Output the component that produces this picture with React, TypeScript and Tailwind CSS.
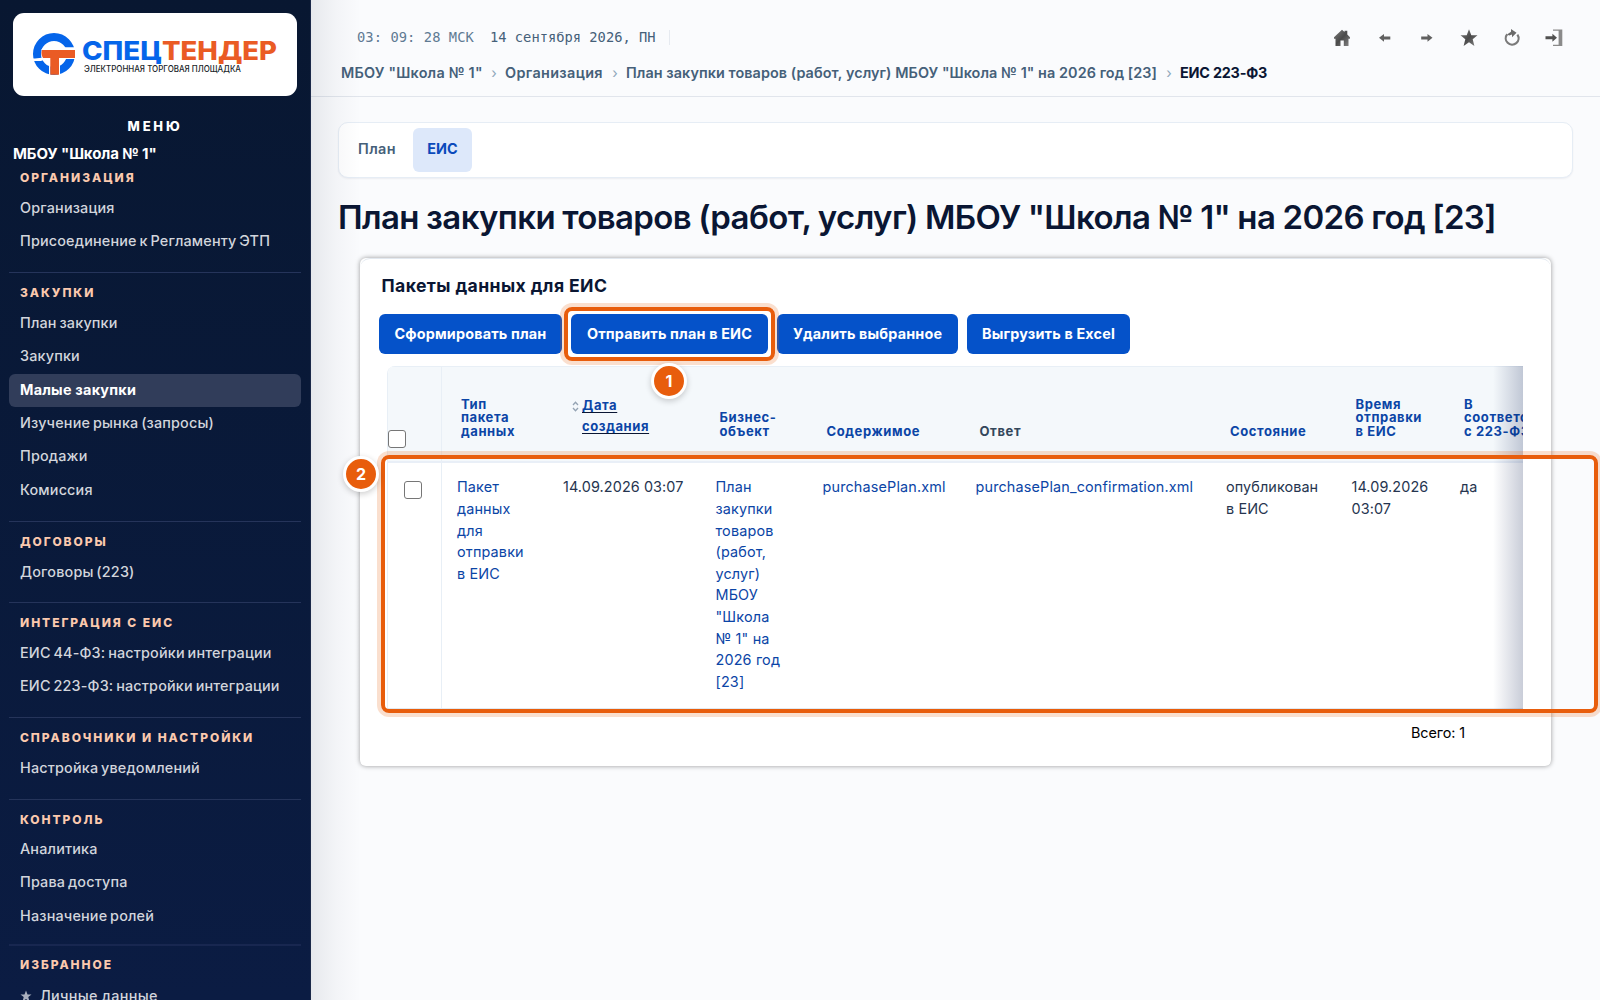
import { clsx } from "clsx";

type MenuGroup = {
  title: string;
  items: string[];
  className: string;
};

const menuGroups: MenuGroup[] = [
  {
    title: "Закупки",
    items: [
      "План закупки",
      "Закупки",
      "Малые закупки",
      "Изучение рынка (запросы)",
      "Продажи",
      "Комиссия",
    ],
    className: "h-[249px]",
  },
  { title: "Договоры", items: ["Договоры (223)"], className: "h-[81px]" },
  {
    title: "Интеграция с ЕИС",
    items: [
      "ЕИС 44-ФЗ: настройки интеграции",
      "ЕИС 223-ФЗ: настройки интеграции",
    ],
    className: "h-[115px]",
  },
  {
    title: "Справочники и настройки",
    items: ["Настройка уведомлений"],
    className: "h-[82px]",
  },
  {
    title: "Контроль",
    items: ["Аналитика", "Права доступа", "Назначение ролей"],
    className: "h-[145px]",
  },
];

const breadcrumbs = [
  { label: 'МБОУ "Школа № 1"', className: "w-[142px] tracking-[0.22px]" },
  { label: "Организация", className: "w-[99px] tracking-[0.35px]" },
  {
    label: 'План закупки товаров (работ, услуг) МБОУ "Школа № 1" на 2026 год [23]',
    className: "w-[532px] tracking-[0.07px]",
  },
];

const columns = [
  { head: "Тип\nпакета\nданных", cell: "Пакет\nданных\nдля\nотправки\nв ЕИС", link: true },
  { head: "Дата\nсоздания", cell: "14.09.2026 03:07", sortable: true },
  {
    head: "Бизнес-\nобъект",
    cell: 'План\nзакупки\nтоваров\n(работ,\nуслуг)\nМБОУ\n"Школа\n№ 1" на\n2026 год\n[23]',
    link: true,
  },
  { head: "Содержимое", cell: "purchasePlan.xml", link: true },
  { head: "Ответ", cell: "purchasePlan_confirmation.xml", link: true, plainHead: true },
  { head: "Состояние", cell: "опубликован\nв ЕИС" },
  { head: "Время\nотправки\nв ЕИС", cell: "14.09.2026\n03:07" },
  { head: "В\nсоответствии\nс 223-ФЗ", cell: "да" },
];

const gridCols =
  "grid w-[1227px] grid-cols-[54px_106px_152.5px_107px_153px_250.5px_125.5px_108.5px_170px]";

function Logo() {
  return (
    <div className="mx-[13px] mt-[13px] h-[83px] rounded-[11px] bg-white">
      <svg width="284" height="83" viewBox="13 13 284 83">
        <circle cx="54" cy="54" r="17" fill="none" stroke="#0565ea" strokeWidth="8" />
        <path d="M43.500 47.300H77V50H41z" fill="#fff" />
        <path d="M32 58.500h3l9-1v2.200l-3 1.300h-9z" fill="#fff" />
        <path d="M58 57h19v2H60v17h-2zM49 58h1.500v18H49z" fill="#fff" />
        <path d="M42 50h33v8H59v16.800h-8.700V58H43q-2.500-4-1-8z" fill="#ea5b24" />
        <text
          x="82"
          y="60"
          fontSize="25.500"
          fontWeight="800"
          fontFamily="Inter, sans-serif"
          textLength="80"
          lengthAdjust="spacingAndGlyphs"
          fill="#0565ea"
        >
          СПЕЦ
        </text>
        <text
          x="162"
          y="60"
          fontSize="25.500"
          fontWeight="800"
          fontFamily="Inter, sans-serif"
          textLength="115"
          lengthAdjust="spacingAndGlyphs"
          fill="#ea5b24"
        >
          ТЕНДЕР
        </text>
        <text
          x="84"
          y="72"
          fontSize="8.500"
          fontWeight="500"
          fontFamily="Inter, sans-serif"
          textLength="157"
          lengthAdjust="spacingAndGlyphs"
          fill="#1b1f2a"
        >
          ЭЛЕКТРОННАЯ ТОРГОВАЯ ПЛОЩАДКА
        </text>
      </svg>
    </div>
  );
}

function MenuHeading({ children }: { children: string }) {
  return (
    <div className="h-4 pl-[11px] text-[12px] leading-4 font-extrabold tracking-[1.95px] text-[#fbc9ae] uppercase">
      {children}
    </div>
  );
}

function MenuItem({ label }: { label: string }) {
  const active = label === "Малые закупки";
  return (
    <a
      className={clsx(
        "block h-[33.33px] rounded-md pl-[11px] leading-[31px] whitespace-nowrap",
        active
          ? "bg-[#313d5a] font-bold tracking-[0.22px] text-white"
          : "font-medium tracking-[0.17px] text-[#d2d5dc] [word-spacing:-1.2px]",
      )}
    >
      {label}
    </a>
  );
}

function Sidebar() {
  return (
    <aside className="relative z-10 h-[1000px] w-[311px] shrink-0 overflow-hidden border-r border-[#1b2949] bg-linear-to-b from-[#081731] to-[#0b1c43] text-[14.4px]">
      <Logo />
      <div className="mt-5 h-5 text-center text-[13px] leading-5 font-extrabold tracking-[2.8px] text-white">
        МЕНЮ
      </div>
      <div className="mt-[7px] h-[22px] pl-[13px] text-[15px] leading-[22px] font-bold tracking-[-0.12px] text-white">
        МБОУ "Школа № 1"
      </div>
      <nav className="mt-[5px] px-[9px]">
        <div className="h-[102px]">
          <MenuHeading>Организация</MenuHeading>
          <div className="mt-[6px]">
            <MenuItem label="Организация" />
            <MenuItem label="Присоединение к Регламенту ЭТП" />
          </div>
        </div>
        {menuGroups.map((group) => (
          <div
            key={group.title}
            className={clsx("border-t border-[#25345a] pt-3", group.className)}
          >
            <MenuHeading>{group.title}</MenuHeading>
            <div className={group.title === "Контроль" ? "mt-[5px]" : "mt-[6px]"}>
              {group.items.map((item) => (
                <MenuItem key={item} label={item} />
              ))}
            </div>
          </div>
        ))}
        <div className="border-t-2 border-[#182750] pt-[11px]">
          <MenuHeading>Избранное</MenuHeading>
          <a className="mt-[6px] flex h-[33px] items-center gap-2 pl-[11px] leading-[31px] font-medium tracking-[0.3px] text-[#d2d5dc]">
            <svg width="12" height="12" viewBox="0 0 24 24" fill="#aab0bf">
              <path d="M12 1l3 8h8l-6.500 5.200L19 23l-7-5-7 5 2.500-8.800L1 9h8z" />
            </svg>
            Личные данные
          </a>
        </div>
      </nav>
    </aside>
  );
}

function ToolbarIcons() {
  return (
    <div className="flex h-[18px] items-center">
      <svg width="0" height="0">
        <defs>
          <linearGradient id="tool" x1="0" y1="0" x2="1" y2="1">
            <stop offset="0" stopColor="#808080" />
            <stop offset="0.5" stopColor="#4a4a4a" />
            <stop offset="1" stopColor="#858585" />
          </linearGradient>
        </defs>
      </svg>
      <svg width="18" height="18" viewBox="0 0 18 18" fill="url(#tool)">
        <path d="M9 .8 11.500 3V1.800h2.800v3.700L17 8.200v1.600h-1.500V17h-4.700v-5.400H7.500V17H2.500V9.800H1V8.200z" />
      </svg>
      <svg className="ml-[27px]" width="14" height="18" viewBox="0 0 14 18" fill="#606060">
        <path d="M1 8.800 6 4.900v2.500h6.300v3H6v2.400z" />
      </svg>
      <svg className="ml-[28px]" width="14" height="18" viewBox="0 0 14 18" fill="#606060">
        <path d="M12.500 8.800 7.500 4.900v2.500H1.200v3h6.300v2.400z" />
      </svg>
      <svg className="ml-[26px]" width="18" height="18" viewBox="0 0 18 18" fill="url(#tool)">
        <path d="M9 .3l2.300 6h6.200l-4.800 4 1.700 6.700L9 13.200 3.600 17l1.700-6.700-4.800-4h6.200z" />
      </svg>
      <svg className="ml-[25px]" width="18" height="18" viewBox="0 0 18 18">
        <path
          d="M4.200 5.200A6.400 6.400 0 1 0 14.400 5.600"
          fill="none"
          stroke="#7a7a7a"
          strokeWidth="2.200"
        />
        <path d="M8 0l5.500 3.800L9 8.300V5.400L6.300 6.600 4 5.400 8 2.800z" fill="#6a6a6a" />
      </svg>
      <svg className="ml-[24px]" width="18" height="18" viewBox="0 0 18 18">
        <path d="M8 .5h9.300V17H8v-1.300h5.600V1.800H8z" fill="#8a8a8a" />
        <path d="M12 8.700 7.400 4.700v2.600H.5v2.900h6.900v2.600z" fill="#505050" />
      </svg>
    </div>
  );
}

function Header() {
  return (
    <header className="h-[97px] border-b border-[#e1e5ec] pt-[26px] pr-[37px] pl-[30px]">
      <div className="flex h-[23px] items-center justify-between">
        <div className="flex items-center pl-4 font-['DejaVu_Sans_Mono',monospace] text-[13.75px] leading-[23px] whitespace-pre">
          <span className="w-[133px] tracking-[0.07px] text-[#5f7a93]">03: 09: 28 МСК</span>
          <span className="w-[179px] text-[#456079]">14 сентября 2026, ПН</span>
          <span className="h-[15px] w-px bg-[#e6eaf0]" />
        </div>
        <ToolbarIcons />
      </div>
      <div className="mt-[13px] flex h-[22px] items-center leading-[22px] font-semibold whitespace-nowrap text-[#456079]">
        {breadcrumbs.map((crumb) => (
          <span key={crumb.label} className="flex">
            <a className={clsx("block", crumb.className)}>{crumb.label}</a>
            <span className="w-[22px] text-center font-normal text-[#8ea6ba]">›</span>
          </span>
        ))}
        <span className="font-bold tracking-[-0.22px] text-[#0a1633]">ЕИС 223-ФЗ</span>
      </div>
    </header>
  );
}

function Tabs() {
  return (
    <div className="mt-[25px] flex h-[56px] rounded-[10px] border border-[#e6edf5] bg-white pt-[5px] pl-[5px] font-semibold shadow-[0_1px_2px_rgba(10,24,51,0.06)]">
      <a className="block w-[69px] pl-[14px] leading-[41px] tracking-[0.4px] text-[#456079]">
        План
      </a>
      <a className="block h-[44px] w-[59px] rounded-md bg-[#dde8fa] text-center leading-[41px] font-bold text-[#0a4abb]">
        ЕИС
      </a>
    </div>
  );
}

function Button({ label, className }: { label: string; className: string }) {
  return (
    <button
      className={clsx(
        "h-10 rounded-md bg-[#0552c9] pb-px text-center font-bold tracking-[0.16px] whitespace-nowrap text-white",
        className,
      )}
    >
      {label}
    </button>
  );
}

function Checkbox() {
  return <span className="block h-[18px] w-[18px] rounded-[3px] border border-[#767676] bg-white" />;
}

function SortIcon() {
  return (
    <svg
      className="mt-[6px] mr-[3px]"
      width="7"
      height="11"
      viewBox="0 0 7 11"
      fill="none"
      stroke="#94a3b3"
      strokeWidth="1.300"
    >
      <path d="M1 4l2.500-2.700L6 4M1 7l2.500 2.700L6 7" />
    </svg>
  );
}

function PackagesTable() {
  return (
    <div className="relative mt-3 ml-[27px] w-[1136px] overflow-hidden rounded-tl-lg border-l border-[#e8eff6]">
      <div
        className={clsx(
          gridCols,
          "h-[97px] border-t border-b-2 border-t-[#e8eff6] border-b-[#e9eff7] bg-[#f4f8fb]",
        )}
      >
        <div className="flex items-end border-r border-[#e8eff6] pb-[13px]">
          <Checkbox />
        </div>
        {columns.map((col) => (
          <div
            key={col.head}
            className={clsx(
              "flex items-end pb-[23px] text-[13px] font-bold tracking-[0.6px] whitespace-pre",
              col.plainHead ? "text-[#33475b]" : "text-[#0b45a6]",
              col.sortable ? "pl-[24px]" : "pl-[19px]",
            )}
          >
            {col.sortable ? (
              <a className="flex leading-[21.600px]">
                <SortIcon />
                <span className="underline decoration-[#0a1633] underline-offset-2">{col.head}</span>
              </a>
            ) : (
              <span className="leading-[13.400px]">{col.head}</span>
            )}
          </div>
        ))}
      </div>
      <div className={clsx(gridCols, "h-[246px] border-b border-[#e1e8f0]")}>
        <div className="border-r border-[#e8eff6] pt-[18px] pl-[16px]">
          <Checkbox />
        </div>
        {columns.map((col) => (
          <div
            key={col.head}
            className={clsx(
              "pt-[13.400px] pl-[15px] leading-[21.600px] whitespace-pre",
              col.link ? "tracking-[0.16px] text-[#0b45a6]" : "tracking-[0.1px] text-[#26354f]",
            )}
          >
            {col.cell}
          </div>
        ))}
      </div>
      <div className="absolute inset-y-0 right-0 w-[30px] bg-linear-to-r from-[#0a1c50]/0 to-[#0a1c50]/22" />
    </div>
  );
}

function PackagesCard() {
  return (
    <section className="mt-[21px] ml-[22px] h-[508px] w-[1191px] rounded-[6px] bg-white shadow-[0_0_5px_rgba(0,0,0,0.4)]">
      <div className="h-[54px] rounded-t-[10px] border-t border-[#e2e8ef] pt-[15px] pl-[21.500px]">
        <h2 className="text-[17.600px] leading-6 font-bold tracking-[0.4px] text-[#0a1633]">
          Пакеты данных для ЕИС
        </h2>
      </div>
      <div className="mt-[2px] flex gap-[9px] pl-[19px]">
        <Button label="Сформировать план" className="w-[183px]" />
        <Button label="Отправить план в ЕИС" className="w-[197px]" />
        <Button label="Удалить выбранное" className="w-[181px]" />
        <Button label="Выгрузить в Excel" className="w-[163px]" />
      </div>
      <PackagesTable />
      <div className="mt-[13px] pr-[86px] text-right leading-[22px] tracking-[-0.1px] text-black">
        Всего: 1
      </div>
    </section>
  );
}

function Marker({ n, className }: { n: number; className: string }) {
  return (
    <div
      className={clsx(
        "absolute z-30 flex h-9 w-9 items-center justify-center rounded-full border-3 border-white bg-[#e85d0c] pb-px text-[16px] font-bold text-white shadow-[0_2px_6px_rgba(0,0,0,0.2)]",
        className,
      )}
    >
      {n}
    </div>
  );
}

export default function App() {
  return (
    <div className="relative flex h-[1000px] w-[1600px] overflow-hidden bg-[#fafbfd] font-['Inter',sans-serif] text-[14.4px]">
      <Sidebar />
      <main className="relative w-[1289px]">
        <Header />
        <div className="px-[27px]">
          <Tabs />
          <h1 className="mt-[19px] text-[33px] leading-10 font-semibold tracking-[-0.6px] whitespace-nowrap text-[#0a1633] [word-spacing:-0.6px]">
            План закупки товаров (работ, услуг) МБОУ "Школа № 1" на 2026 год [23]
          </h1>
          <PackagesCard />
        </div>
        <div className="absolute inset-y-0 left-0 w-[50px] bg-linear-to-r from-[#0a1633]/8 via-[#0a1633]/3 to-transparent" />
      </main>

      {/* Step callouts */}
      <div className="absolute top-[307px] left-[564px] z-20 h-[54px] w-[211px] rounded-lg border-4 border-[#e85d0c] shadow-[0_0_0_4px_rgba(232,93,12,0.2)]" />
      <div className="absolute top-[455px] left-[381px] z-20 h-[258px] w-[1217px] rounded-lg border-4 border-[#e85d0c] shadow-[0_0_0_4px_rgba(232,93,12,0.2)]" />
      <Marker n={1} className="top-[363px] left-[651px]" />
      <Marker n={2} className="top-[456px] left-[343px]" />
    </div>
  );
}
